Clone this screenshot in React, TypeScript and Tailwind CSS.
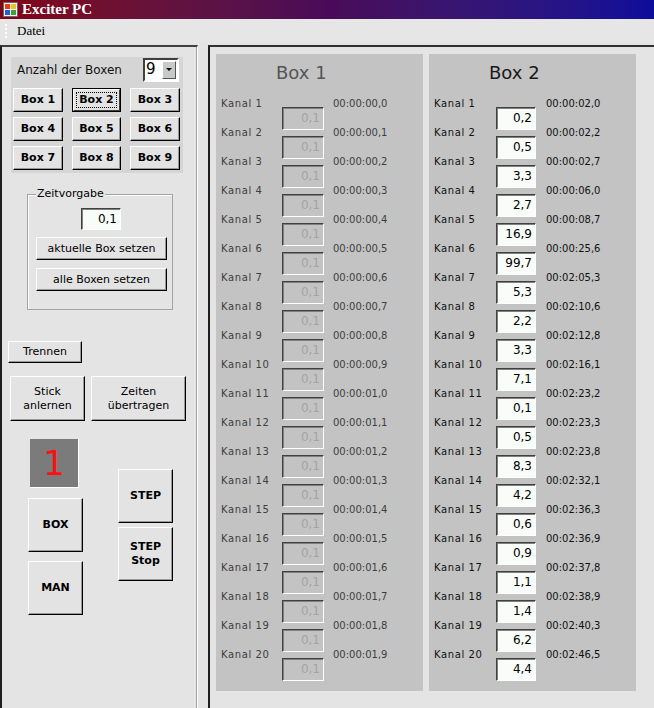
import React from "react";

const box1Times = Array.from({ length: 20 }, (_, i) => `00:00:0${Math.floor(i / 10)},${i % 10}`);

const box2Values = ["0,2", "0,5", "3,3", "2,7", "16,9", "99,7", "5,3", "2,2", "3,3", "7,1", "0,1", "0,5", "8,3", "4,2", "0,6", "0,9", "1,1", "1,4", "6,2", "4,4"];
const box2Times = [
  "00:00:02,0", "00:00:02,2", "00:00:02,7", "00:00:06,0", "00:00:08,7",
  "00:00:25,6", "00:02:05,3", "00:02:10,6", "00:02:12,8", "00:02:16,1",
  "00:02:23,2", "00:02:23,3", "00:02:23,8", "00:02:32,1", "00:02:36,3",
  "00:02:36,9", "00:02:37,8", "00:02:38,9", "00:02:40,3", "00:02:46,5",
];

// klassischer Windows-Button (erhaben)
function Btn({ className = "", children }: { className?: string; children: React.ReactNode }) {
  return (
    <button
      className={`flex items-center justify-center bg-[#e3e3e3] border border-t-white border-l-white border-r-black border-b-black shadow-[inset_-1px_-1px_0_#9a9a9a] leading-[14px] text-black ${className}`}
    >
      {children}
    </button>
  );
}

function AppIcon() {
  return (
    <svg width="15" height="15" viewBox="0 0 15 15">
      <rect x="0.5" y="0.5" width="14" height="14" fill="#f0f0f0" stroke="#6a6a6a" />
      <rect x="2" y="2" width="5" height="5" fill="#e04020" />
      <rect x="8" y="2" width="5" height="5" fill="#f0c020" />
      <rect x="2" y="8" width="5" height="5" fill="#2060d0" />
      <rect x="8" y="8" width="5" height="5" fill="#40a040" />
    </svg>
  );
}

function BoxPanel({ title, active }: { title: string; active: boolean }) {
  const rows = Array.from({ length: 20 }, (_, i) => i);
  const txt = active ? "text-[#111]" : "text-[#3e3e3e]";
  return (
    <div className="w-[207px] h-[637px] bg-[#c3c3c3] pt-[8px] overflow-hidden">
      <div className={`pl-[60px] h-[21px] leading-[21px] text-[18px] ${active ? "text-[#1a1a1a]" : "text-[#555]"}`}>{title}</div>
      <div className="mt-[11px]">
        {rows.map((i) => (
          <div key={i} className="flex h-[29px] items-start pl-[5px]">
            <div className={`${active ? "w-[62px]" : "w-[61px]"} mt-[3px] leading-[13px] text-[10px] tracking-[0.6px] ${txt}`}>
              Kanal {i + 1}
            </div>
            <div
              className={`${active ? "w-[40px] bg-[#f9fdf9] text-black" : "w-[42px] bg-[#c3c3c3] text-[#a3a3a3]"} mt-[13px] h-[23px] shrink-0 border border-t-[#404040] border-l-[#404040] border-b-white border-r-white shadow-[inset_1px_1px_0_#808080] text-right pr-[3px] text-[12px] leading-[21px]`}
            >
              {active ? box2Values[i] : "0,1"}
            </div>
            <div className={`${active ? "ml-[10px]" : "ml-[9px]"} mt-[3px] leading-[13px] text-[10px] ${txt}`}>
              {active ? box2Times[i] : box1Times[i]}
            </div>
          </div>
        ))}
      </div>
    </div>
  );
}

export default function App() {
  return (
    <div className="w-[654px] h-[708px] overflow-hidden flex flex-col bg-[#e4e4e4] font-['DejaVu_Sans',sans-serif]">
      {/* Titelleiste */}
      <div className="h-[19px] flex items-center bg-linear-to-r from-[#820012] via-[#4a0a58] to-[#0c0c9a] pl-[3px]">
        <AppIcon />
        <span className="ml-[4px] text-white font-bold text-[15px] font-['Liberation_Serif',serif] leading-[19px]">Exciter PC</span>
      </div>

      {/* Menü */}
      <div className="h-[24px] flex items-center bg-[#e6e6e6] pl-[5px]">
        <div className="flex flex-col gap-[2px]">
          <span className="w-[2px] h-[2px] bg-white" />
          <span className="w-[2px] h-[2px] bg-white" />
          <span className="w-[2px] h-[2px] bg-white" />
          <span className="w-[2px] h-[2px] bg-white" />
        </div>
        <span className="ml-[10px] text-[13px] font-['Liberation_Serif',serif] text-black">Datei</span>
      </div>

      <div className="mt-[2px] flex flex-1 min-h-0">
        {/* linke Leiste */}
        <div className="w-[198px] shrink-0 flex flex-col border-t-2 border-l-2 border-t-[#404040] border-l-[#202020] border-r border-r-white shadow-[inset_-1px_0_0_#a0a0a0] text-[11px] text-black">
          {/* Boxen-Auswahl */}
          <div className="mt-[10px] ml-[9px] w-[172px] h-[116px] bg-[#d5d5d5]">
            <div className="flex items-center justify-between pt-[1px] pl-[6px] pr-[4px]">
              <span className="text-[12px] text-[#111]">Anzahl der Boxen</span>
              <div className="flex w-[36px] h-[24px] border-2 border-t-[#404040] border-l-[#404040] border-b-white border-r-white bg-[#fbfffb]">
                <span className="flex-1 pl-[1px] text-[15px] leading-[19px] text-black">9</span>
                <span className="w-[14px] my-[1px] mr-[1px] flex items-center justify-center bg-[#c8c8c8] border border-t-white border-l-white border-r-[#555] border-b-[#555]">
                  <svg width="6" height="4" viewBox="0 0 6 4"><path d="M0 0h6L3 3z" fill="#000" /></svg>
                </span>
              </div>
            </div>
            <div className="mt-[6px] pl-[2px] grid grid-cols-[50px_49px_50px] gap-x-[9px] gap-y-[5px] font-bold text-[11px]">
              {[1, 2, 3, 4, 5, 6, 7, 8, 9].map((n) =>
                n === 2 ? (
                  <button key={n} className="h-[24px] flex border border-black bg-[#e3e3e3] p-0">
                    <span className="flex-1 flex border border-t-white border-l-white border-r-[#404040] border-b-[#404040]">
                      <span className="flex-1 m-[2px] flex items-center justify-center border border-dotted border-black leading-[14px]">Box 2</span>
                    </span>
                  </button>
                ) : (
                  <Btn key={n} className="h-[24px]">Box {n}</Btn>
                ),
              )}
            </div>
          </div>

          {/* Zeitvorgabe */}
          <div className="relative mt-[21px] ml-[25px] w-[146px] h-[116px] border border-[#a3a3a3] shadow-[inset_1px_1px_0_#fff]">
            <span className="absolute left-[8px] top-[-8px] px-[1px] bg-[#e4e4e4] leading-[14px]">Zeitvorgabe</span>
            <div className="mt-[13px] ml-[53px] w-[40px] h-[22px] border border-t-[#404040] border-l-[#404040] border-b-white border-r-white shadow-[inset_1px_1px_0_#808080] bg-[#f9fdf9] text-right pr-[3px] text-[12px] leading-[20px]">
              0,1
            </div>
            <Btn className="mt-[7px] ml-[8px] w-[131px] h-[23px]">aktuelle Box setzen</Btn>
            <Btn className="mt-[8px] ml-[8px] w-[131px] h-[23px]">alle Boxen setzen</Btn>
          </div>

          <Btn className="mt-[31px] ml-[6px] w-[74px] h-[22px]">Trennen</Btn>

          <div className="mt-[13px] ml-[8px] flex gap-[6px]">
            <Btn className="w-[75px] h-[45px] text-center">Stick<br />anlernen</Btn>
            <Btn className="w-[95px] h-[45px] text-center">Zeiten<br />übertragen</Btn>
          </div>

          <div className="mt-[18px] ml-[26px] flex gap-[35px] font-bold">
            <div className="flex flex-col">
              <div className="ml-[2px] w-[49px] h-[49px] bg-[#7b7b7b] border-r border-b border-r-white border-b-white flex items-center justify-center text-[#ff1010] text-[34px] font-normal leading-none">
                1
              </div>
              <Btn className="mt-[10px] w-[55px] h-[54px]">BOX</Btn>
              <Btn className="mt-[9px] w-[55px] h-[54px]">MAN</Btn>
            </div>
            <div className="mt-[30px] flex flex-col">
              <Btn className="w-[55px] h-[54px]">STEP</Btn>
              <Btn className="mt-[4px] w-[55px] h-[54px] text-center">STEP<br />Stop</Btn>
            </div>
          </div>
        </div>

        {/* Hauptbereich */}
        <div className="ml-[10px] flex-1 border-t-2 border-l-2 border-t-[#303030] border-l-[#202020] pt-[7px] pl-[6px]">
          <div className="flex gap-[6px]">
            <BoxPanel title="Box 1" active={false} />
            <BoxPanel title="Box 2" active={true} />
          </div>
        </div>
      </div>
    </div>
  );
}
